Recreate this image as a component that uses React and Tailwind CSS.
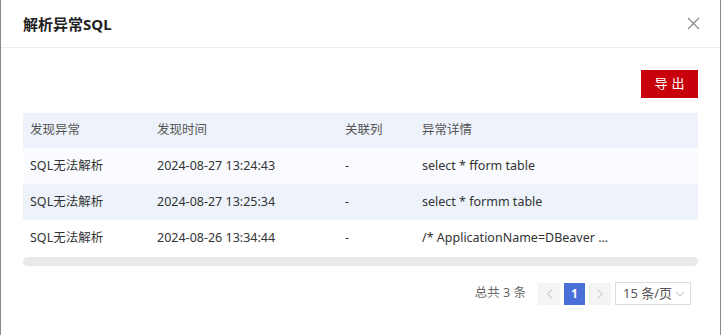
import React from 'react';

const rows = [
    { type: 'SQL无法解析', time: '2024-08-27 13:24:43', col: '-', detail: 'select * fform table', bg: 'bg-[#f9fbfe]' },
    { type: 'SQL无法解析', time: '2024-08-27 13:25:34', col: '-', detail: 'select * formm table', bg: 'bg-[#eef3fb]' },
    { type: 'SQL无法解析', time: '2024-08-26 13:34:44', col: '-', detail: '/* ApplicationName=DBeaver ...', bg: 'bg-white' },
];

const App = () => {
    return (
        <div
            className="w-[721px] h-[335px] bg-white border-l border-r border-[#8a8a8a] text-[#333] overflow-hidden"
            style={{ fontFamily: '"Noto Sans", "Noto Sans CJK SC", sans-serif' }}
        >
            <div className="h-[48px] flex items-center justify-between pl-[22px] pr-[20px] border-b border-[#ececec]">
                <h2 className="text-[15px] font-bold text-[#222] pt-[2px]">解析异常SQL</h2>
                <button className="text-[#888]">
                    <svg width="13" height="13" viewBox="0 0 13 13" fill="none" stroke="currentColor" strokeWidth="1.2">
                        <path d="M1 1 L12 12 M12 1 L1 12" />
                    </svg>
                </button>
            </div>

            <div className="px-[22px]">
                <div className="flex justify-end pt-[22px] pb-[15px]">
                    <button className="w-[57px] h-[28px] bg-[#c8000b] text-white text-[13px] tracking-[4px] pl-[4px]">导出</button>
                </div>

                <table className="w-full text-[12.5px] border-collapse">
                    <thead>
                        <tr className="bg-[#eef2fa] h-[35px] text-[#555] text-left">
                            <th className="font-normal pl-[7px] w-[134px]">发现异常</th>
                            <th className="font-normal w-[188px]">发现时间</th>
                            <th className="font-normal w-[77px]">关联列</th>
                            <th className="font-normal">异常详情</th>
                        </tr>
                    </thead>
                    <tbody>
                        {rows.map((r, i) => (
                            <tr key={i} className={`${r.bg} h-[36px]`}>
                                <td className="pl-[7px]">{r.type}</td>
                                <td>{r.time}</td>
                                <td>{r.col}</td>
                                <td>{r.detail}</td>
                            </tr>
                        ))}
                    </tbody>
                </table>
                <div className="h-[9px] mt-[1px] bg-[#e9e9e9] rounded-full" />

                <div className="flex items-center justify-end gap-[4px] mt-[16px] pr-[7px] text-[12.5px]">
                    <span className="text-[#666] mr-[8px]">总共 3 条</span>
                    <button className="w-[22px] h-[22px] bg-[#f4f4f4] text-[#bbb] flex items-center justify-center">
                        <svg width="7" height="10" viewBox="0 0 7 10" fill="none" stroke="currentColor" strokeWidth="1">
                            <path d="M6 1 L1.5 5 L6 9" />
                        </svg>
                    </button>
                    <button className="w-[21px] h-[22px] bg-[#4a6fd8] text-white font-bold text-[12px] flex items-center justify-center">1</button>
                    <button className="w-[22px] h-[22px] bg-[#f4f4f4] text-[#bbb] flex items-center justify-center">
                        <svg width="7" height="10" viewBox="0 0 7 10" fill="none" stroke="currentColor" strokeWidth="1">
                            <path d="M1 1 L5.5 5 L1 9" />
                        </svg>
                    </button>
                    <div className="w-[76px] h-[23px] border border-[#ddd] flex items-center justify-between pl-[7px] pr-[5px] text-[#555] text-[13px]">
                        <span>15 条/页</span>
                        <svg width="10" height="6" viewBox="0 0 10 6" fill="none" stroke="#bbb" strokeWidth="1">
                            <path d="M1 1 L5 5 L9 1" />
                        </svg>
                    </div>
                </div>
            </div>
        </div>
    );
};

export default App;
